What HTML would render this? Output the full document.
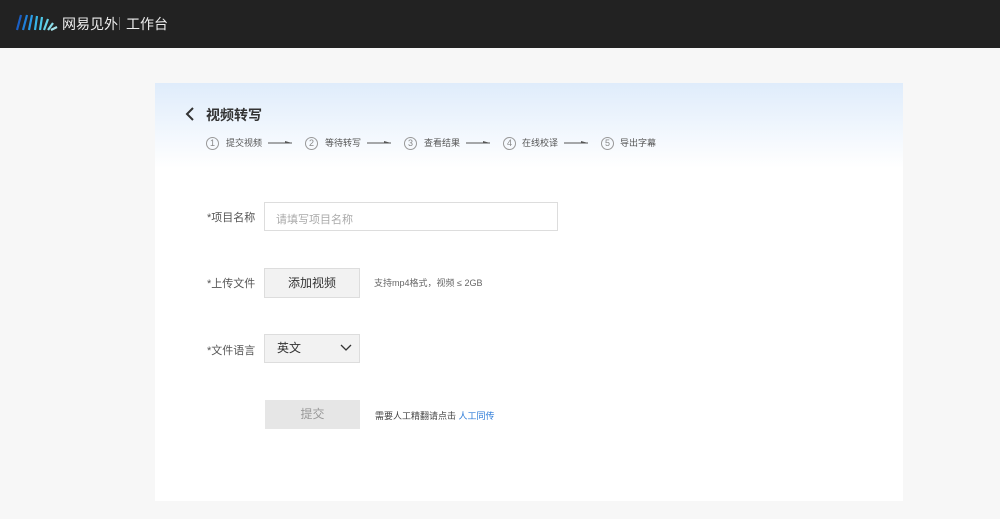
<!DOCTYPE html>
<html><head><meta charset="utf-8"><style>
*{margin:0;padding:0;box-sizing:border-box}
body{width:1000px;height:519px;background:#f7f7f7;font-family:"Liberation Sans","Noto Sans CJK SC",sans-serif;position:relative;overflow:hidden}
.top{position:absolute;left:0;top:0;width:1000px;height:48px;background:#222}
.abs{position:absolute;white-space:nowrap}
.card{position:absolute;left:155px;top:83px;width:748px;height:418px;background:#fff}
.hd{position:absolute;left:0;top:0;width:748px;height:85px;background:linear-gradient(#dfecfb,#fff)}
.c{position:absolute;top:54px;width:13px;height:13px;border:1px solid #999;border-radius:50%;font-size:9px;line-height:11px;text-align:center;color:#888}
.sl{position:absolute;top:54px;font-size:9px;color:#555;line-height:13px}
.ar{position:absolute;top:55px}
.lab{font-size:11px;color:#555}
.btn{position:absolute;background:#f2f2f2;border:1px solid #ddd;font-size:12px;color:#333;text-align:center}
</style></head><body>
<div class="top">
<svg class="abs" style="left:14px;top:13px" width="44" height="19" viewBox="0 0 44 19">
<g stroke-width="2.2" fill="none">
<path d="M3 17 L7 2" stroke="#1a5fc4"/><path d="M9 17 L13 2" stroke="#1f7fd8"/><path d="M15 17 L18 2" stroke="#2a9be6"/><path d="M21 17 L23 3" stroke="#38b6e8"/><path d="M26 17 L28 4" stroke="#4cc8e8"/><path d="M30 17 L34 6" stroke="#66d3e8"/><path d="M34 17 L39 10" stroke="#88ddea"/><path d="M37 17 L43 14" stroke="#a8e6ee"/>
</g></svg>
<div class="abs" style="left:62px;top:14px;font-size:14px;color:#eee">网易见外</div>
<div class="abs" style="left:119px;top:17px;width:1px;height:13px;background:#666"></div>
<div class="abs" style="left:126px;top:14px;font-size:14px;color:#eee">工作台</div>
</div>
<div class="card">
<div class="hd"></div>
<svg class="abs" style="left:30px;top:24px" width="12" height="14"><path d="M8 1 L2 7 L8 13" stroke="#333" stroke-width="2" fill="none"/></svg>
<div class="abs" style="left:51px;top:22px;font-size:14px;font-weight:bold;color:#333">视频转写</div>

<div class="c" style="left:51px">1</div><div class="sl" style="left:71px">提交视频</div>
<svg class="ar" style="left:113px" width="25" height="10"><path d="M0 5 H24" stroke="#555"/><path d="M17 3 L24 5 L17 5Z" fill="#555"/></svg>
<div class="c" style="left:150px">2</div><div class="sl" style="left:170px">等待转写</div>
<svg class="ar" style="left:212px" width="25" height="10"><path d="M0 5 H24" stroke="#555"/><path d="M17 3 L24 5 L17 5Z" fill="#555"/></svg>
<div class="c" style="left:249px">3</div><div class="sl" style="left:269px">查看结果</div>
<svg class="ar" style="left:311px" width="25" height="10"><path d="M0 5 H24" stroke="#555"/><path d="M17 3 L24 5 L17 5Z" fill="#555"/></svg>
<div class="c" style="left:348px">4</div><div class="sl" style="left:367px">在线校译</div>
<svg class="ar" style="left:409px" width="25" height="10"><path d="M0 5 H24" stroke="#555"/><path d="M17 3 L24 5 L17 5Z" fill="#555"/></svg>
<div class="c" style="left:446px">5</div><div class="sl" style="left:465px">导出字幕</div>

<div class="abs lab" style="left:52px;top:126px">*项目名称</div>
<div class="abs" style="left:109px;top:119px;width:294px;height:29px;border:1px solid #ddd;font-size:11px;color:#aaa;padding:8px 11px">请填写项目名称</div>
<div class="abs lab" style="left:52px;top:192px">*上传文件</div>
<div class="btn" style="left:109px;top:185px;width:96px;height:30px;line-height:28px">添加视频</div>
<div class="abs" style="left:219px;top:193px;font-size:9px;color:#666">支持mp4格式，视频 ≤ 2GB</div>
<div class="abs lab" style="left:52px;top:259px">*文件语言</div>
<div class="btn" style="left:109px;top:251px;width:96px;height:29px;line-height:27px;text-align:left;padding-left:12px">英文</div>
<svg class="abs" style="left:185px;top:261px" width="12" height="8"><path d="M1 1 L6 6 L11 1" stroke="#333" stroke-width="1.3" fill="none"/></svg>
<div class="abs" style="left:110px;top:317px;width:95px;height:29px;background:#e6e6e6;font-size:12px;color:#999;text-align:center;line-height:29px">提交</div>
<div class="abs" style="left:220px;top:326px;font-size:9px;color:#444">需要人工精翻请点击 <span style="color:#2a7ad8">人工同传</span></div>
</div>
</body></html>
